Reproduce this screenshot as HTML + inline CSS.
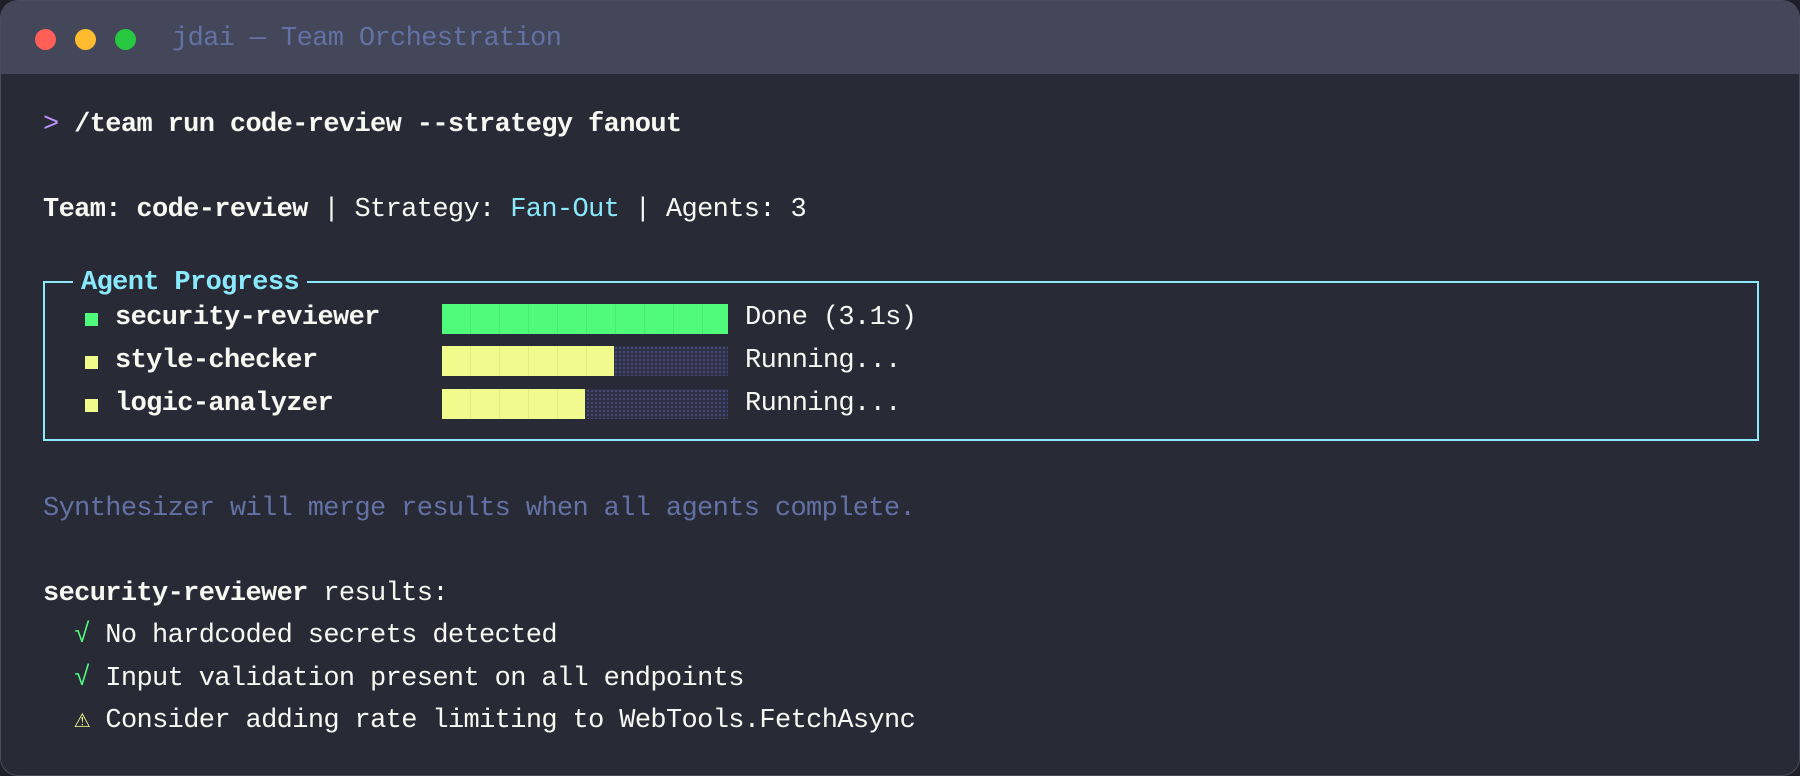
<!DOCTYPE html>
<html><head><meta charset="utf-8"><style>
html,body{margin:0;padding:0;width:1800px;height:776px;background:#1e1f29;overflow:hidden}
.win{position:absolute;left:0;top:0;width:1798px;height:774px;border:1px solid #4a4c5c;border-radius:18px;background:#282a36;overflow:hidden}
.bar{position:absolute;left:0;top:0;right:0;height:73px;background:#44475a}
.dot{position:absolute;top:28px;width:21px;height:21px;border-radius:50%}
.t{position:absolute;font-family:"Liberation Mono","DejaVu Sans Mono",monospace;font-size:27px;letter-spacing:-0.63px;color:#f8f8f2;white-space:pre;line-height:30px}
b{font-weight:bold}
.box{position:absolute;left:42px;top:280px;width:1712px;height:156px;border:2px solid #8be9fd}
.sq{position:absolute;width:13px;height:13px}
.pb{position:absolute;left:441px;width:286px;height:30px;background-color:#2f3244;background-image:radial-gradient(#4b5090 0.8px,transparent 1px);background-size:4px 4px}
.f{position:absolute;left:0;top:0;bottom:0;background-image:repeating-linear-gradient(90deg,transparent 0 28px,rgba(0,0,0,0.06) 28px 29px)}
</style></head><body>
<div class="win">
<div class="bar">
<div class="dot" style="left:34px;background:#ff5f57"></div>
<div class="dot" style="left:74px;background:#febc2e"></div>
<div class="dot" style="left:114px;background:#28c840"></div>
<div class="t" style="left:171px;top:23px;color:#6272a4">jdai — Team Orchestration</div>
</div>
<div class="t" style="left:42px;top:109px"><span style="color:#bd93f9">&gt;</span> <b>/team run code-review --strategy fanout</b></div>
<div class="t" style="left:42px;top:194px"><b>Team: code-review</b> | Strategy: <span style="color:#8be9fd">Fan-Out</span> | Agents: 3</div>
<div class="box"></div>
<div class="t" style="left:72px;top:267px;background:#282a36;padding:0 8px;color:#8be9fd"><b>Agent Progress</b></div>
<div class="sq" style="left:84px;top:312px;background:#50fa7b"></div>
<div class="sq" style="left:84px;top:355px;background:#f1fa8c"></div>
<div class="sq" style="left:84px;top:398px;background:#f1fa8c"></div>
<div class="t" style="left:114px;top:302px"><b>security-reviewer</b></div>
<div class="t" style="left:114px;top:345px"><b>style-checker</b></div>
<div class="t" style="left:114px;top:388px"><b>logic-analyzer</b></div>
<div class="pb" style="top:303px"><div class="f" style="width:286px;background-color:#50fa7b"></div></div>
<div class="pb" style="top:345px"><div class="f" style="width:172px;background-color:#f1fa8c"></div></div>
<div class="pb" style="top:388px"><div class="f" style="width:143px;background-color:#f1fa8c"></div></div>
<div class="t" style="left:744px;top:302px">Done (3.1s)</div>
<div class="t" style="left:744px;top:345px">Running...</div>
<div class="t" style="left:744px;top:388px">Running...</div>
<div class="t" style="left:42px;top:493px;color:#6272a4">Synthesizer will merge results when all agents complete.</div>
<div class="t" style="left:42px;top:578px"><b>security-reviewer</b> results:</div>
<div class="t" style="left:42px;top:620px">  <span style="color:#50fa7b">√</span> No hardcoded secrets detected</div>
<div class="t" style="left:42px;top:663px">  <span style="color:#50fa7b">√</span> Input validation present on all endpoints</div>
<div class="t" style="left:42px;top:705px">  <span style="color:#f1fa8c">⚠</span> Consider adding rate limiting to WebTools.FetchAsync</div>
</div>
</body></html>
